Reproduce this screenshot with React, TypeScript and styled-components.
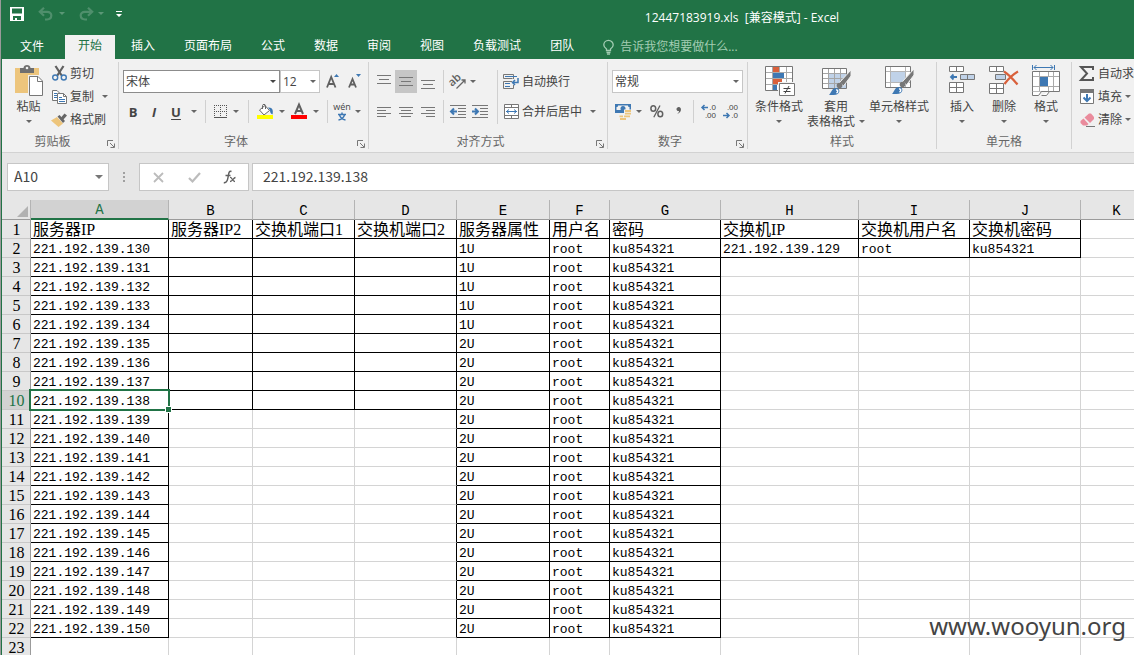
import React from 'react';
import styled, { createGlobalStyle, css } from 'styled-components';

const ui = `"Open Sans", "Noto Sans CJK SC", sans-serif`;
const green = '#217346';
const ink = '#444444';
const blue = '#3e78b3';
const line = '#777777';

const Global = createGlobalStyle`
  *, *::before, *::after { box-sizing: border-box; }
  html, body { margin: 0; height: 100%; }
  body { background: #9a9a9a; overflow: hidden; }
  #root { height: 100%; }
  button, input, select { font: inherit; color: inherit; margin: 0; }
  svg { display: block; flex: none; overflow: visible; }
`;

const Window = styled.div`
  position: relative;
  display: flex;
  flex-direction: column;
  height: 100vh;
  margin-left: 1px;
  border-left: 1px solid ${green};
  background: #e6e6e6;
  color: ${ink};
  font: 12px/16px ${ui};
  overflow: hidden;
`;

const TitleBar = styled.header`
  display: flex;
  align-items: center;
  height: 35px;
  flex: none;
  background: ${green};
  color: #fff;
`;

const QuickAccess = styled.div`
  display: flex;
  align-items: center;
  width: 128px;
  height: 28px;
  padding: 0 0 8px 8px;
`;

const Title = styled.h1`
  flex: 1;
  margin: 0;
  padding-left: 220px;
  font: 12px/16px ${ui};
  text-align: center;
  white-space: pre;
`;

const TabBar = styled.nav`
  display: flex;
  gap: 3px;
  height: 24px;
  flex: none;
  background: ${green};
`;

const Tab = styled.button<{ $active?: boolean; $file?: boolean }>`
  flex: none;
  border: 0;
  padding: 0 13px 2px;
  background: ${p => (p.$active ? '#f1f1f1' : 'transparent')};
  color: ${p => (p.$active ? green : '#fff')};
  white-space: nowrap;
  ${p => p.$file && css`
    width: 60px;
    padding: 0;
  `}
`;

const TellMe = styled.button`
  display: flex;
  align-items: center;
  gap: 6px;
  border: 0;
  padding: 0 13px;
  background: transparent;
  color: #a3cdb3;
  white-space: nowrap;
`;

const Ribbon = styled.div`
  display: flex;
  height: 94px;
  flex: none;
  padding-top: 3px;
  background: #f1f1f1;
  border-bottom: 1px solid #d2d2d2;
  overflow: hidden;
`;

const GroupBox = styled.section<{ $w: number }>`
  flex: none;
  width: ${p => p.$w}px;
  height: 87px;
  border-right: 1px solid #d2d2d2;
`;

const GroupBody = styled.div<{ $pad?: number }>`
  display: flex;
  height: 70px;
  padding-left: ${p => p.$pad ?? 4}px;
`;

const GroupFoot = styled.footer`
  display: flex;
  align-items: center;
  height: 17px;
  padding-top: 3px;
  color: #666;
`;

const GroupName = styled.span`
  flex: 1;
  text-align: center;
`;

const Plain = styled.button`
  display: flex;
  align-items: center;
  justify-content: center;
  flex: none;
  border: 0;
  padding: 0;
  background: transparent;
  white-space: nowrap;
`;

const LaunchButton = styled(Plain)`
  margin: 3px 3px 0 4px;
`;

const Tool = styled(Plain)<{ $w?: number; $on?: boolean }>`
  width: ${p => p.$w ?? 22}px;
  height: 23px;
  background: ${p => (p.$on ? '#c6c6c6' : 'transparent')};
`;

const Letter = styled(Tool)<{ $style: 'b' | 'i' | 'u' }>`
  font: 13px/16px ${ui};
  font-weight: 700;
  font-style: ${p => (p.$style === 'i' ? 'italic' : 'normal')};
  text-decoration: ${p => (p.$style === 'u' ? 'underline' : 'none')};
  text-underline-offset: 2px;
`;

const Big = styled(Plain)<{ $w: number }>`
  width: ${p => p.$w}px;
  height: 69px;
  flex-direction: column;
  justify-content: flex-start;
  line-height: 15px;
  padding-top: 3px;
`;

const BigIcon = styled.span`
  height: 34px;
`;

const BigLine = styled.span`
  display: flex;
  align-items: center;
  gap: 4px;
  height: 15px;
`;

const Row = styled.div`
  display: flex;
  align-items: center;
`;

const Stack = styled.div<{ $top?: number; $gap?: number; $left?: number }>`
  display: flex;
  flex-direction: column;
  gap: ${p => p.$gap ?? 0}px;
  padding-top: ${p => p.$top ?? 0}px;
  padding-left: ${p => p.$left ?? 0}px;
`;

const Labelled = styled(Plain)`
  justify-content: flex-start;
  gap: 3px;
  height: 23px;
`;

const Slot = styled.span`
  display: flex;
  justify-content: center;
  width: 16px;
`;

const SepBox = styled.span<{ $w: number; $h?: number }>`
  display: flex;
  justify-content: center;
  flex: none;
  width: ${p => p.$w}px;
  height: ${p => p.$h ?? 23}px;
  &::before { content: ''; width: 1px; background: #d0d0d0; }
`;

const Spacer = styled.span<{ $w: number }>`
  width: ${p => p.$w}px;
`;

const SelectBox = styled.span<{ $w: number; $strong?: boolean }>`
  position: relative;
  flex: none;
  width: ${p => p.$w}px;
  height: 23px;
  select {
    appearance: none;
    width: 100%;
    height: 100%;
    padding: 0 2px;
    border: 1px solid ${p => (p.$strong ? '#8c8c8c' : '#c6c6c6')};
    border-radius: 0;
    background: #fff;
  }
  svg { position: absolute; right: 4px; top: 10px; pointer-events: none; }
`;

const FormulaBar = styled.div`
  display: flex;
  flex: none;
  gap: 3px;
  height: 47px;
  padding: 10px 0 9px 5px;
  font: 14px/20px "Noto Sans CJK SC", sans-serif;
`;

const NameBox = styled.label`
  display: flex;
  align-items: center;
  width: 102px;
  padding: 0 5px 0 6px;
  border: 1px solid #c6c6c6;
  background: #fff;
  input { flex: 1; min-width: 0; border: 0; padding: 0 0 2px; background: none; outline: 0; }
`;

const Grip = styled.span`
  display: flex;
  align-items: center;
  justify-content: center;
  width: 24px;
`;

const EntryTools = styled.div`
  display: flex;
  width: 110px;
  border: 1px solid #c6c6c6;
  background: #fff;
  button { flex: 1; }
`;

const FormulaInput = styled.input`
  flex: 1;
  min-width: 0;
  border: 1px solid #c6c6c6;
  border-right: 0;
  padding: 0 10px 2px;
  background: #fff;
  outline: 0;
`;

const SheetArea = styled.main`
  flex: 1;
  min-height: 0;
  overflow: hidden;
`;

const Sheet = styled.table`
  table-layout: fixed;
  width: 100%;
  min-width: 1151px;
  border-collapse: separate;
  border-spacing: 0;
  color: #000;
  background: #fff;
  tr { height: 19px; }
  thead tr { height: 20px; }
`;

const ColHead = styled.th<{ $sel?: boolean }>`
  height: 20px;
  padding: 3px 0 0;
  border-right: 1px solid #b4b4b4;
  border-bottom: ${p => (p.$sel ? `2px solid ${green}` : '1px solid #9b9b9b')};
  background: ${p => (p.$sel ? '#d2d2d2' : '#e6e6e6')};
  color: ${p => (p.$sel ? green : '#000')};
  font: 400 14px/15px "Liberation Mono", monospace;
`;

const Corner = styled(ColHead)`
  svg { margin: 0 2px 0 auto; }
`;

const RowHead = styled.th<{ $sel?: boolean }>`
  height: 19px;
  padding: 2px 0 0 1px;
  border-right: 1px solid #9b9b9b;
  border-bottom: 1px solid #c8c8c8;
  background: ${p => (p.$sel ? '#d2d2d2' : '#e6e6e6')};
  color: ${p => (p.$sel ? green : '#000')};
  font: 16px/16px "Liberation Serif", serif;
`;

const Cell = styled.td<{ $right?: boolean; $bottom?: boolean; $title?: boolean; $sel?: boolean }>`
  position: relative;
  height: 19px;
  padding: 4px 0 0 2px;
  border-right: 1px solid ${p => (p.$right ? '#000' : '#d4d4d4')};
  border-bottom: 1px solid ${p => (p.$bottom ? '#000' : '#d4d4d4')};
  font: 13px/14px "Liberation Mono", monospace;
  white-space: nowrap;
  ${p => p.$title && css`
    padding-top: 2px;
    font: 16px/16px "Liberation Serif", "Noto Sans CJK SC", serif;
  `}
  ${p => p.$sel && css`
    z-index: 1;
    &::before {
      content: '';
      position: absolute;
      inset: -2px;
      border: 2px solid ${green};
    }
    &::after {
      content: '';
      position: absolute;
      right: -4px;
      bottom: -4px;
      width: 7px;
      height: 7px;
      border: 1px solid #fff;
      background: ${green};
    }
  `}
`;

const Watermark = styled.div`
  position: absolute;
  right: 8px;
  bottom: 12px;
  z-index: 2;
  color: #444;
  font: 24px/34px "Noto Sans", sans-serif;
`;

const Caret = ({ color = '#666' }: { color?: string }) => (
  <svg width="6" height="3" viewBox="0 0 6 3"><path d="M0 0h6L3 3z" fill={color} /></svg>
);

const Drop = ({ w = 8, label }: { w?: number; label: string }) => (
  <Tool $w={w} aria-label={label}><Caret /></Tool>
);

const Launcher = ({ label }: { label: string }) => (
  <LaunchButton aria-label={label}>
    <svg width="8" height="8" viewBox="0 0 8 8" fill="none" stroke={line}>
      <path d="M.5 6V.5H6M3 3l4 4M7.500 3.500v4h-4" />
    </svg>
  </LaunchButton>
);

function Group({ name, w, pad, launcher, children }: {
  name: string; w: number; pad?: number; launcher?: boolean; children: React.ReactNode;
}) {
  return (
    <GroupBox $w={w} aria-label={name}>
      <GroupBody $pad={pad}>{children}</GroupBody>
      <GroupFoot>
        <GroupName>{name}</GroupName>
        {launcher && <Launcher label={`${name}设置`} />}
      </GroupFoot>
    </GroupBox>
  );
}

/* Horizontal strokes given as [x1, x2, y] */
const Lines = ({ rows, w = 14, h = 14 }: { rows: number[][]; w?: number; h?: number }) => (
  <svg width={w} height={h} viewBox={`0 0 ${w} ${h}`} stroke={line}>
    {rows.map(([a, b, y]) => <path key={`${a}-${y}`} d={`M${a} ${y}.5H${b}`} />)}
  </svg>
);

const SaveIcon = () => (
  <svg width="14" height="14" viewBox="0 0 14 14">
    <path d="M0 0h14v14H0z" fill="#fff" />
    <path d="M2 1.500h10v5H2zM3 9h8v4H7v-2H5v2H3z" fill={green} />
  </svg>
);

const UndoIcon = ({ flip }: { flip?: boolean }) => (
  <svg width="15" height="14" viewBox="0 0 15 14" fill="none" stroke="#4f8f6c" strokeWidth="2.200">
    <g transform={flip ? 'matrix(-1 0 0 1 15 0)' : undefined}>
      <path d="M6 .8L1.800 4.800 6 8.800M2.500 4.800H9c6 0 5.500 7.500 0 7.700H7" />
    </g>
  </svg>
);

const BulbIcon = () => (
  <svg width="11" height="15" viewBox="0 0 11 15" fill="none" stroke="#a3cdb3" strokeWidth="1.300">
    <path d="M3.500 10.500V9C1.500 7.500.8 6.500.8 5a4.700 4.700 0 0 1 9.400 0c0 1.500-.7 2.500-2.700 4v1.500zM3.500 12.500h4M4 14.200h3" />
  </svg>
);

const PasteIcon = () => (
  <svg width="28" height="31" viewBox="0 0 28 31">
    <path d="M0 3h24v25H0z" fill="#edc57c" />
    <path d="M5 3h3.500c0-4 7-4 7 0H19v5H5z" fill="#6f6f6f" />
    <circle cx="12" cy="3" r="1.300" fill="#f1f1f1" />
    <path d="M13 10h11l5 5v16H13z" fill="#f1f1f1" />
    <path d="M14.500 11.500H23l4.500 4.500v14.500h-13z" fill="#fff" stroke={line} />
    <path d="M22.500 11.500V16.500h5" fill="none" stroke={line} />
  </svg>
);

const CutIcon = () => (
  <svg width="15" height="15" viewBox="0 0 15 15" fill="none">
    <path d="M3.500 0l6.500 10M11.500 0L5 10" stroke="#606060" strokeWidth="2.200" />
    <circle cx="3.200" cy="11.500" r="2.500" stroke={blue} strokeWidth="1.400" />
    <circle cx="11.800" cy="11.500" r="2.500" stroke={blue} strokeWidth="1.400" />
  </svg>
);

const CopyIcon = () => (
  <svg width="15" height="14" viewBox="0 0 15 14" stroke={line}>
    <path d="M.5.5H5L7.500 3v7.500h-7z" fill="#fff" />
    <path d="M2 3.500h3M2 5.500h3M2 7.500h3" stroke={blue} />
    <path d="M5.500 3.500h6l3 3v7h-9z" fill="#fff" />
    <path d="M11.500 3.500v3h3" fill="none" />
    <path d="M7 7.500h3M7 9.500h6M7 11.500h6" stroke={blue} />
  </svg>
);

const BrushIcon = () => (
  <svg width="16" height="14" viewBox="0 0 16 14">
    <path d="M0 7.500L6 4l6 6.500L7.500 14z" fill="#edc57c" />
    <path d="M6.500 3.500L8.500 2 14 8l-2 2z" fill="#666" />
    <path d="M10 4.500L13.500.5 16 2.500 12 7z" fill="#666" />
  </svg>
);

const BordersIcon = () => (
  <svg width="13" height="13" viewBox="0 0 13 13" fill="none" stroke="#555">
    <path d="M0 .5h13M.5 0v12M12.500 0v12M6.500 0v12M0 6.500h13" strokeDasharray="1 1" />
    <path d="M0 12.500h13" />
  </svg>
);

const FillIcon = () => (
  <svg width="16" height="15" viewBox="0 0 16 15">
    <path d="M2.500 6L8 1.500l4.500 5L7 11z" fill="#fff" stroke="#666" />
    <path d="M5.500 5V1.500c0-1.500 3-1.500 3 0V5" fill="none" stroke="#666" />
    <path d="M11 3.500c4.500-.5 5.500 3 4.500 7-2-1-2.500-2.500-2.500-4.500z" fill={blue} />
    <path d="M0 11h16v4H0z" fill="#ff0" />
  </svg>
);

const FontColorIcon = () => (
  <svg width="16" height="15" viewBox="0 0 16 15">
    <path d="M4 10L8 .5 12 10M5.500 7h5" fill="none" stroke="#606060" strokeWidth="2" />
    <path d="M0 11h16v4H0z" fill="red" />
  </svg>
);

const ScaleIcon = ({ up }: { up?: boolean }) => (
  <svg width="14" height="15" viewBox="0 0 14 15">
    {up
      ? <path d="M1 13.500L5.200 3l4.300 10.500M2.500 10h5.500" fill="none" stroke="#606060" strokeWidth="1.800" />
      : <path d="M1 13.500L4.500 5 8 13.500M2.200 10.500h4.600" fill="none" stroke="#606060" strokeWidth="1.800" />}
    <path d={up ? 'M8 3l2.500-3L13 3z' : 'M8 0h5l-2.500 3z'} fill={blue} />
  </svg>
);

const PhoneticIcon = () => (
  <svg width="18" height="19" viewBox="0 0 18 19">
    <text x="9" y="8" textAnchor="middle" fontSize="9" fill={ink}>wén</text>
    <path d="M5 12.500h8M9 10.500v2M6.500 13c1 3 3 4.500 6 5M11.500 13c-1 3-3 4.500-6 5" fill="none" stroke={blue} strokeWidth="1.500" />
  </svg>
);

const OrientIcon = () => (
  <svg width="17" height="16" viewBox="0 0 17 16">
    <text x="0" y="10" fontSize="11" fontWeight="600" fill="#606060" transform="rotate(-42 5 9)">ab</text>
    <path d="M6.500 14.500L15 6M11.500 6H15v3.500" fill="none" stroke="#666" strokeWidth="1.300" />
  </svg>
);

const IndentIcon = ({ out }: { out?: boolean }) => (
  <svg width="16" height="14" viewBox="0 0 16 14" fill="none" stroke={line}>
    <path d="M0 .5h16M8 3.500h8M8 6.500h8M8 9.500h8M0 12.500h16" />
    <path d={out ? 'M7 6.500H1M4 3.500l-3 3 3 3' : 'M0 6.500h6M3 3.500l3 3-3 3'} stroke={blue} strokeWidth="2" />
  </svg>
);

const WrapIcon = () => (
  <svg width="16" height="16" viewBox="0 0 16 16" fill="none" stroke={line}>
    <path d="M10.500 5V.5H.5v4h9M9 7.500H.5v7h10V11" />
    <path d="M2 2.500h12M2 9.500h5M2 12.500h5" stroke={blue} />
    <path d="M15 4v4.500H9.500M12 6L9.500 8.500 12 11" stroke={blue} strokeWidth="1.500" />
  </svg>
);

const MergeIcon = () => (
  <svg width="15" height="15" viewBox="0 0 15 15" fill="#fff" stroke={line}>
    <path d="M.5.5h14v14H.5zM.5 3.500h14M.5 11.500h14M7.500 0v3.500M7.500 11.500V15" />
    <path d="M2 7.500h11M5 5.500l-2.500 2L5 9.500M10 5.500l2.500 2-2.500 2" fill="none" stroke={blue} />
  </svg>
);

const CurrencyIcon = () => (
  <svg width="16" height="16" viewBox="0 0 16 16">
    <path d="M0 0h16v9H0z" fill={blue} />
    <path d="M1.500 3c1 0 1.500-.5 1.500-1.500h10c0 1 .5 1.500 1.500 1.500v3H1.500z" fill="#f1f1f1" />
    <ellipse cx="8" cy="4.500" rx="2.500" ry="2.600" fill={blue} />
    <path d="M9 5.500h8V13h-5v3H4v-5h5z" fill="#f1f1f1" />
    <path d="M10 7h6M10 9.700h6M9 12.300h6M4.500 12.300H8M5 15h6" stroke="#edc57c" strokeWidth="1.800" />
  </svg>
);

const PercentIcon = () => (
  <svg width="14" height="13" viewBox="0 0 14 13" fill="none" stroke="#606060" strokeWidth="1.500">
    <ellipse cx="3.300" cy="3.500" rx="2.400" ry="2.800" />
    <ellipse cx="10.300" cy="9" rx="2.400" ry="2.800" />
    <path d="M10 .5L3.800 12.300" strokeWidth="1.300" />
  </svg>
);

const CommaIcon = () => (
  <svg width="6" height="14" viewBox="0 0 6 14">
    <path d="M1 9c1.500-1 2-2 2-3C1.500 6.200.5 5.500.5 4.200.5 3 1.500 2 2.800 2 5.800 2 6.200 7.500 1 9z" fill="#606060" />
  </svg>
);

const DecimalIcon = ({ more }: { more?: boolean }) => (
  <svg width="16" height="15" viewBox="0 0 16 15" fontSize="8" fontFamily="Liberation Sans" fill={ink}>
    <text x="15" y="6" textAnchor="end">{more ? '.0' : '.00'}</text>
    <text x="15" y="14" textAnchor="end">{more ? '.00' : '.0'}</text>
    <path d={more ? 'M7 3.500H1M3.500 1L1 3.500 3.500 6' : 'M0 11.500h6M3.500 9L6 11.500 3.500 14'} fill="none" stroke={blue} strokeWidth="1.500" />
  </svg>
);

const CondIcon = () => (
  <svg width="31" height="31" viewBox="0 0 31 31" fill="none">
    <path d="M1.500 1.500h27v24h-27z" fill="#fff" stroke={line} />
    <path d="M8.500 2v23M15.500 2v23M22.500 2v23M2 7.500h26M2 13.500h26M2 19.500h26" stroke="#aaa" />
    <path d="M9 2h6v5H9zM9 14h9v5H9z" fill="#d9603b" />
    <path d="M9 8h11v5H9zM9 20h4v5H9z" fill={blue} />
    <path d="M14 17h17v14H14z" fill="#f1f1f1" />
    <path d="M15.500 18.500h15v12h-15z" fill="#fff" stroke={line} />
    <path d="M19.500 23.500h7M19.500 26.500h7M25 21l-4 7.500" stroke="#444" />
  </svg>
);

const StyleBrush = () => (
  <>
    <path d="M30 5v6L22.500 21l-4-3.500z" fill="#777" stroke="#f1f1f1" />
    <circle cx="18.500" cy="20.500" r="2.800" fill="#777" />
    <path d="M8 30c2-1.500 2.500-6.500 6.500-7 5.500 0 5.500 7-2 7z" fill={blue} />
    <path d="M15 25c2-.5 2.500 2 .5 3" fill="none" stroke="#fff" strokeWidth="1.500" />
  </>
);

const TableStyleIcon = () => (
  <svg width="31" height="31" viewBox="0 0 31 31" fill="none">
    <path d="M1.500 3.500h24v20h-24z" fill="#fff" />
    <path d="M8 9h17v14H8z" fill="#c0d2e8" />
    <path d="M7.500 3.500v20M13.500 3.500v20M19.500 3.500v20M1 8.500h25M1 13.500h25M1 18.500h25" stroke="#a5a5a5" />
    <path d="M1.500 3.500h24v20h-24z" stroke={line} />
    <StyleBrush />
  </svg>
);

const CellStyleIcon = () => (
  <svg width="31" height="31" viewBox="0 0 31 31" fill="none">
    <path d="M1.500 1.500h25v21h-25z" fill="#fff" />
    <path d="M6.500 1.500v21M21.500 1.500v21M1 6.500h26M1 17.500h26" stroke="#b5b5b5" />
    <path d="M7 7h14v10H7z" fill="#c0d2e8" />
    <path d="M1.500 1.500h25v21h-25z" stroke={line} />
    <g transform="translate(0 -1)"><StyleBrush /></g>
  </svg>
);

const InsertIcon = () => (
  <svg width="26" height="31" viewBox="0 0 26 31" fill="#fff" stroke={line}>
    <path d="M.5 1.500h14v5H.5zM7.500 1.500v5M.5 17.500h14v10H.5zM7.500 17.500v10M.5 22.500h14" />
    <path d="M11.500 9.500h14v5h-14zM18.500 9.500v5" fill="#c0d2e8" />
    <path d="M8 12H2M4.500 9.500L2 12l2.500 2.500" fill="none" stroke={blue} strokeWidth="1.800" />
  </svg>
);

const DeleteIcon = () => (
  <svg width="30" height="31" viewBox="0 0 30 31" fill="#fff" stroke={line}>
    <path d="M.5 1.500h14v5H.5zM7.500 1.500v5M.5 18.500h14v10H.5zM7.500 18.500v10M.5 23.500h14" />
    <path d="M6.500 9.500h10v5h-10z" fill="#c0d2e8" />
    <path d="M15 6.500c5 3 8 6.500 13.500 13M29 6.500C23 10 20 13 15.500 19" fill="none" stroke="#d9603b" strokeWidth="2.200" />
  </svg>
);

const FormatIcon = () => (
  <svg width="28" height="31" viewBox="0 0 28 31" fill="#fff" stroke={line}>
    <path d="M.5 6.500h27v20H.5z" />
    <path d="M1 11.500h26M1 21.500h26M7.500 7v19M16.500 7v4M16.500 21v5M21.500 7v19" stroke="#aaa" />
    <path d="M8 12h8v9H8z" fill={blue} stroke="none" />
    <path d="M.5 26.500v4h6l3-4M9.500 30.500h5l3-4" />
    <path d="M.5 0v5M22.500 0v5M2 2.500h19M4.500 0L2 2.500 4.500 5M18.500 0L21 2.500 18.500 5" fill="none" stroke={blue} />
  </svg>
);

const SumIcon = () => (
  <svg width="16" height="15" viewBox="0 0 16 15" fill="none" stroke="#555" strokeWidth="2">
    <path d="M14 4V1H2l6 6.500L2 14h12v-3" />
  </svg>
);

const FillDownIcon = () => (
  <svg width="14" height="15" viewBox="0 0 14 15" fill="none">
    <path d="M.5.5h13v14H.5z" fill="#fff" stroke={line} />
    <path d="M0 0h14v4H0z" fill={line} />
    <path d="M7 5v7M3.500 8.500L7 12l3.500-3.500" stroke={blue} strokeWidth="2" />
  </svg>
);

const EraserIcon = () => (
  <svg width="15" height="14" viewBox="0 0 15 14">
    <path d="M4.500 4.500L9 .5h2l3 3.500v2l-4 4z" fill="#ea8b9c" />
    <path d="M3.500 5.500l5 5.500-1.500 1.500H3L.5 10V8z" fill="#ea8b9c" />
    <path d="M6 13.500h9" stroke={line} />
  </svg>
);

const colWidths = [138, 84, 102, 102, 93, 60, 111, 138, 111, 111];
const letters = 'ABCDEFGHIJK'.split('');
const titles = ['服务器IP', '服务器IP2', '交换机端口1', '交换机端口2', '服务器属性', '用户名', '密码', '交换机IP', '交换机用户名', '交换机密码', ''];

const rows: string[][] = [titles];
for (let i = 0; i < 21; i++) {
  const extra = i === 0 ? ['221.192.139.129', 'root', 'ku854321', ''] : ['', '', '', ''];
  rows.push([`221.192.139.${130 + i}`, '', '', '', i < 5 ? '1U' : '2U', 'root', 'ku854321', ...extra]);
}
rows.push(letters.map(() => ''));

/* A cell is part of a ruled block when its column still has ruled rows. */
const ruledRows = [22, 10, 10, 10, 22, 22, 22, 2, 2, 2, 0];
const ruled = (r: number, c: number) => c >= 0 && c < ruledRows.length && r < ruledRows[c];

const tabs = ['开始', '插入', '页面布局', '公式', '数据', '审阅', '视图', '负载测试', '团队'];

export default function App() {
  return (
    <Window>
      <Global />
      <TitleBar>
        <QuickAccess>
          <Plain aria-label="保存"><SaveIcon /></Plain>
          <Spacer $w={14} />
          <Plain aria-label="撤消"><UndoIcon /></Plain>
          <Tool $w={18} aria-label="撤消列表"><Caret color="#5b9776" /></Tool>
          <Spacer $w={8} />
          <Plain aria-label="恢复"><UndoIcon flip /></Plain>
          <Tool $w={14} aria-label="恢复列表"><Caret color="#5b9776" /></Tool>
          <Spacer $w={8} />
          <Plain aria-label="自定义快速访问工具栏">
            <svg width="6" height="6" viewBox="0 0 6 6" fill="#fff"><path d="M0 0h6v1H0zM0 3h6L3 6z" /></svg>
          </Plain>
        </QuickAccess>
        <Title>12447183919.xls  [兼容模式] - Excel</Title>
      </TitleBar>
      <TabBar>
        <Tab $file>文件</Tab>
        {tabs.map((t, i) => <Tab key={t} $active={i === 0}>{t}</Tab>)}
        <TellMe><BulbIcon />告诉我您想要做什么...</TellMe>
      </TabBar>

      <Ribbon>
        <Group name="剪贴板" w={117} launcher>
          <Big $w={45}>
            <BigIcon><PasteIcon /></BigIcon>
            <BigLine>粘贴</BigLine>
            <BigLine><Caret /></BigLine>
          </Big>
          <Stack>
            <Labelled><Slot><CutIcon /></Slot>剪切</Labelled>
            <Row>
              <Labelled><Slot><CopyIcon /></Slot>复制</Labelled>
              <Drop w={22} label="复制选项" />
            </Row>
            <Labelled><Slot><BrushIcon /></Slot>格式刷</Labelled>
          </Stack>
        </Group>

        <Group name="字体" w={250} launcher>
          <Stack $top={8} $gap={7}>
            <Row>
              <SelectBox $w={157} $strong>
                <select aria-label="字体"><option>宋体</option></select><Caret color={ink} />
              </SelectBox>
              <SelectBox $w={40}>
                <select aria-label="字号"><option>12</option></select><Caret />
              </SelectBox>
              <Spacer $w={2} />
              <Tool aria-label="增大字号"><ScaleIcon up /></Tool>
              <Tool aria-label="减小字号"><ScaleIcon /></Tool>
            </Row>
            <Row>
              <Letter $w={20} $style="b">B</Letter>
              <Letter $style="i">I</Letter>
              <Letter $style="u">U</Letter>
              <Drop w={14} label="下划线选项" />
              <SepBox $w={8} />
              <Tool aria-label="边框"><BordersIcon /></Tool>
              <Drop w={10} label="边框选项" />
              <SepBox $w={14} />
              <Tool $w={20} aria-label="填充颜色"><FillIcon /></Tool>
              <Drop w={14} label="填充颜色选项" />
              <Tool $w={20} aria-label="字体颜色"><FontColorIcon /></Tool>
              <Drop w={14} label="字体颜色选项" />
              <SepBox $w={8} />
              <Tool aria-label="拼音"><PhoneticIcon /></Tool>
              <Drop w={10} label="拼音选项" />
            </Row>
          </Stack>
        </Group>

        <Group name="对齐方式" w={239} launcher>
          <Stack $top={8} $gap={7}>
            <Row>
              <Tool aria-label="顶端对齐"><Lines rows={[[0, 14, 0], [2, 12, 4], [0, 14, 8]]} /></Tool>
              <Tool $on aria-label="垂直居中"><Lines rows={[[0, 14, 2], [2, 12, 6], [0, 14, 10]]} /></Tool>
              <Tool aria-label="底端对齐"><Lines rows={[[0, 14, 5], [2, 12, 9], [0, 14, 13]]} /></Tool>
              <SepBox $w={8} />
              <Tool aria-label="方向"><OrientIcon /></Tool>
              <Drop label="方向选项" />
            </Row>
            <Row>
              <Tool aria-label="左对齐"><Lines rows={[[0, 14, 2], [0, 9, 5], [0, 14, 8], [0, 9, 11]]} /></Tool>
              <Tool aria-label="居中"><Lines rows={[[0, 14, 2], [2, 12, 5], [0, 14, 8], [2, 12, 11]]} /></Tool>
              <Tool aria-label="右对齐"><Lines rows={[[0, 14, 2], [5, 14, 5], [0, 14, 8], [5, 14, 11]]} /></Tool>
              <SepBox $w={8} />
              <Tool aria-label="减少缩进量"><IndentIcon out /></Tool>
              <Tool aria-label="增加缩进量"><IndentIcon /></Tool>
            </Row>
          </Stack>
          <Stack $top={8}><SepBox $w={12} $h={54} /></Stack>
          <Stack $top={8} $gap={7}>
            <Labelled><Slot><WrapIcon /></Slot>自动换行</Labelled>
            <Row>
              <Labelled><Slot><MergeIcon /></Slot>合并后居中</Labelled>
              <Drop w={22} label="合并选项" />
            </Row>
          </Stack>
        </Group>

        <Group name="数字" w={140} launcher>
          <Stack $top={8} $gap={7}>
            <SelectBox $w={131}>
              <select aria-label="数字格式"><option>常规</option></select><Caret />
            </SelectBox>
            <Row>
              <Tool aria-label="会计数字格式"><CurrencyIcon /></Tool>
              <Drop w={10} label="货币选项" />
              <Tool $w={26} aria-label="百分比样式"><PercentIcon /></Tool>
              <Tool $w={18} aria-label="千位分隔样式"><CommaIcon /></Tool>
              <SepBox $w={10} />
              <Tool aria-label="增加小数位数"><DecimalIcon more /></Tool>
              <Tool aria-label="减少小数位数"><DecimalIcon /></Tool>
            </Row>
          </Stack>
        </Group>

        <Group name="样式" w={189}>
          <Big $w={54}>
            <BigIcon><CondIcon /></BigIcon>
            <BigLine>条件格式</BigLine>
            <BigLine><Caret /></BigLine>
          </Big>
          <Big $w={60}>
            <BigIcon><TableStyleIcon /></BigIcon>
            <BigLine>套用</BigLine>
            <BigLine>表格格式<Caret /></BigLine>
          </Big>
          <Big $w={66}>
            <BigIcon><CellStyleIcon /></BigIcon>
            <BigLine>单元格样式</BigLine>
            <BigLine><Caret /></BigLine>
          </Big>
        </Group>

        <Group name="单元格" w={135}>
          <Big $w={42}>
            <BigIcon><InsertIcon /></BigIcon>
            <BigLine>插入</BigLine>
            <BigLine><Caret /></BigLine>
          </Big>
          <Big $w={42}>
            <BigIcon><DeleteIcon /></BigIcon>
            <BigLine>删除</BigLine>
            <BigLine><Caret /></BigLine>
          </Big>
          <Big $w={42}>
            <BigIcon><FormatIcon /></BigIcon>
            <BigLine>格式</BigLine>
            <BigLine><Caret /></BigLine>
          </Big>
        </Group>

        <Stack $left={7}>
          <Labelled><Slot><SumIcon /></Slot>自动求和</Labelled>
          <Labelled><Slot><FillDownIcon /></Slot>填充<Caret /></Labelled>
          <Labelled><Slot><EraserIcon /></Slot>清除<Caret /></Labelled>
        </Stack>
      </Ribbon>

      <FormulaBar>
        <NameBox>
          <input aria-label="名称框" defaultValue="A10" />
          <svg width="8" height="4" viewBox="0 0 8 4"><path d="M0 0h8L4 4z" fill="#777" /></svg>
        </NameBox>
        <Grip>
          <svg width="2" height="11" viewBox="0 0 2 11" fill="#a0a0a0"><path d="M0 0h2v2H0zM0 4h2v2H0zM0 8h2v2H0z" /></svg>
        </Grip>
        <EntryTools>
          <Plain aria-label="取消">
            <svg width="11" height="11" viewBox="0 0 11 11" stroke="#bcbcbc" strokeWidth="1.800"><path d="M1 1l9 9M10 1l-9 9" /></svg>
          </Plain>
          <Plain aria-label="输入">
            <svg width="13" height="11" viewBox="0 0 13 11" fill="none" stroke="#bcbcbc" strokeWidth="2.200"><path d="M1 6l3.500 3.500L12 1" /></svg>
          </Plain>
          <Plain aria-label="插入函数">
            <svg width="14" height="15" viewBox="0 0 14 15" fill="none" stroke="#606060">
              <path d="M8.500 1.500C6 .5 5.800 3 5.300 6S4 13.500.8 12.500M2.500 5.500h5" strokeWidth="1.500" />
              <path d="M7 7.500c2-.5 2.500 4 5 4M12.500 7.500C10.500 7.500 9.500 11.500 7 11.500" strokeWidth="1.300" />
            </svg>
          </Plain>
        </EntryTools>
        <FormulaInput aria-label="编辑栏" defaultValue="221.192.139.138" />
      </FormulaBar>

      <SheetArea>
        <Sheet>
          <colgroup>
            <col style={{ width: 29 }} />
            {colWidths.map((w, i) => <col key={letters[i]} style={{ width: w }} />)}
            <col />
          </colgroup>
          <thead>
            <tr>
              <Corner aria-label="全选"><svg width="11" height="11" viewBox="0 0 11 11"><path d="M11 0v11H0z" fill="#b2b2b2" /></svg></Corner>
              {letters.map((l, i) => <ColHead key={l} scope="col" $sel={i === 0}>{l}</ColHead>)}
            </tr>
          </thead>
          <tbody>
            {rows.map((cells, r) => (
              <tr key={r}>
                <RowHead scope="row" $sel={r === 9}>{r + 1}</RowHead>
                {cells.map((v, c) => (
                  <Cell
                    key={c}
                    $title={r === 0}
                    $right={ruled(r, c) || ruled(r, c + 1)}
                    $bottom={ruled(r, c)}
                    $sel={r === 9 && c === 0}
                  >{v}</Cell>
                ))}
              </tr>
            ))}
          </tbody>
        </Sheet>
      </SheetArea>
      <Watermark>www.wooyun.org</Watermark>
    </Window>
  );
}
